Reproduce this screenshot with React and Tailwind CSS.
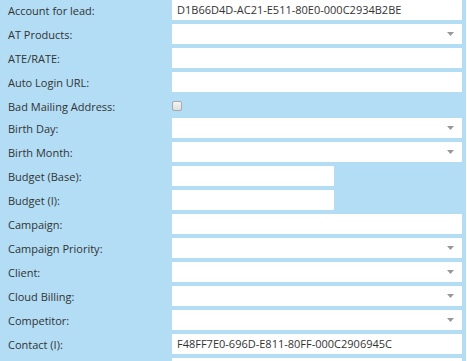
import React from 'react';

const rows = [
  { label: 'Account for lead:', type: 'text', value: 'D1B66D4D-AC21-E511-80E0-000C2934B2BE' },
  { label: 'AT Products:', type: 'select' },
  { label: 'ATE/RATE:', type: 'text' },
  { label: 'Auto Login URL:', type: 'text' },
  { label: 'Bad Mailing Address:', type: 'checkbox' },
  { label: 'Birth Day:', type: 'select' },
  { label: 'Birth Month:', type: 'select' },
  { label: 'Budget (Base):', type: 'short' },
  { label: 'Budget (I):', type: 'short' },
  { label: 'Campaign:', type: 'text' },
  { label: 'Campaign Priority:', type: 'select' },
  { label: 'Client:', type: 'select' },
  { label: 'Cloud Billing:', type: 'select' },
  { label: 'Competitor:', type: 'select' },
  { label: 'Contact (I):', type: 'text', value: 'F48FF7E0-696D-E811-80FF-000C2906945C' },
  // next row only peeks in at the bottom edge
  { label: '', type: 'text' },
];

function Field({ type, value }) {
  if (type === 'checkbox') {
    return (
      <div className="w-[10px] h-[10px] rounded-[2px] border border-[#a9a9a9] bg-gradient-to-b from-[#f4f4f4] to-[#dedede]" />
    );
  }
  if (type === 'select') {
    return (
      <div className="w-[290px] h-[20px] bg-white flex items-center justify-end pr-[8px]">
        <svg width="7" height="4" viewBox="0 0 7 4">
          <path d="M0 0H7L3.5 4Z" fill="#999" />
        </svg>
      </div>
    );
  }
  return (
    <div
      className={`${type === 'short' ? 'w-[162px]' : 'w-[290px]'} h-[20px] bg-white flex items-center pl-[5px] text-[11px] text-[#333]`}
    >
      {value}
    </div>
  );
}

export default function App() {
  return (
    <div className="w-[467px] h-[361px] overflow-hidden bg-white">
      <div
        className="w-[466px] h-[361px] bg-[#b2ddf5] text-[11px] text-[#333]"
        style={{ fontFamily: '"Open Sans", sans-serif' }}
      >
        {rows.map((r, i) => (
          <div
            key={i}
            className={`flex items-center h-[20px] ${r.type === 'checkbox' ? 'mb-[2px]' : 'mb-[4px]'}`}
          >
            <div className="w-[172px] shrink-0 pl-[8px] leading-none whitespace-nowrap">{r.label}</div>
            <Field type={r.type} value={r.value} />
          </div>
        ))}
      </div>
    </div>
  );
}
